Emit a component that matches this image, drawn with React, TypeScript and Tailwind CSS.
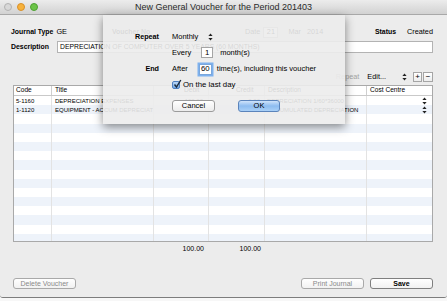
import React from "react";

const COLS = "grid grid-cols-[38px_102px_55px_56px_102px_65px]";

const ROWS = [
  {
    code: "5-1160",
    title: "DEPRECIATION EXPENSES",
    debit: "100.00",
    credit: "0.00",
    desc: "DEPRECIATION 1/60*36000",
  },
  {
    code: "1-1120",
    title: "EQUIPMENT - ACCUM DEPRECIAT",
    debit: "0.00",
    credit: "100.00",
    desc: "ACCUMULATED DEPRECIATION",
  },
];

function UpDown({ className = "" }: { className?: string }) {
  return (
    <svg width="5" height="8" viewBox="0 0 5 8" className={className}>
      <path d="M2.5 0.5 L4.6 3 L0.4 3 Z" fill="#222" />
      <path d="M2.5 7.5 L4.6 5 L0.4 5 Z" fill="#222" />
    </svg>
  );
}

function Light({ color }: { color: string }) {
  return <span className={`block w-[8px] h-[8px] rounded-full border ${color}`} />;
}

function Btn({
  children,
  w,
  disabled,
}: {
  children: React.ReactNode;
  w: string;
  disabled?: boolean;
}) {
  return (
    <div
      className={`${w} h-[11px] flex items-center justify-center rounded-[3px] border border-[#a9a9a9] bg-gradient-to-b from-white to-[#f1f1f1] text-[7px] leading-none ${
        disabled ? "text-[#8a8a8a]" : "text-black"
      }`}
    >
      {children}
    </div>
  );
}

export default function App() {
  const blank = Array.from({ length: 14 });

  return (
    <div className="relative w-[447px] h-[301px] overflow-hidden bg-[#f7f7f7] font-['Liberation_Sans',Arial,sans-serif] text-black">
      {/* Window */}
      <div className="h-[298px] flex flex-col bg-[#ececec] border-b border-[#7d7d7d] rounded-b-[3px]">
        {/* Title bar */}
        <div className="relative h-[15px] shrink-0 flex items-center bg-gradient-to-b from-[#ececec] to-[#d2d2d2] border-b border-[#a8a8a8]">
          <div className="flex items-center gap-[5px] pl-[4px]">
            <Light color="bg-[#d8d8d8] border-[#b2b2b2]" />
            <Light color="bg-[#f7b23c] border-[#d8902a]" />
            <Light color="bg-[#6cc448] border-[#4ea032]" />
          </div>
          <div className="absolute inset-0 flex items-center justify-center text-[9px] text-[#2a2a2a] leading-none">
            New General Voucher for the Period 201403
          </div>
        </div>

        {/* Content */}
        <div className="flex-1 flex flex-col pl-[11px] pr-[14px]">
          {/* Row 1 */}
          <div className="mt-[11px] h-[12px] flex items-center text-[7.3px] leading-none">
            <div className="w-[101px] flex items-center gap-[3px]">
              <span className="font-bold text-[6.9px]">Journal Type</span>
              <span>GE</span>
            </div>
            <div className="w-[133px] flex items-center">
              <span className="font-bold text-[6.9px] text-[#333]">Voucher No</span>
            </div>
            <div className="flex items-center">
              <span>Date</span>
              <span className="ml-[3px] w-[15px] h-[11px] bg-white border border-[#b9b9b9] flex items-center justify-center">
                21
              </span>
              <span className="ml-[10px]">Mar</span>
              <span className="ml-[6px]">2014</span>
            </div>
            <div className="flex-1" />
            <span className="font-bold text-[6.9px]">Status</span>
            <span className="ml-[11px]">Created</span>
          </div>

          {/* Row 2 */}
          <div className="mt-[3px] h-[12px] flex items-center">
            <span className="font-bold text-[6.9px] leading-none w-[46px]">Description</span>
            <div className="flex-1 h-[12px] bg-white border border-[#b3b3b3] flex items-center pl-[2px] text-[6.8px] leading-none">
              DEPRECIATION OF COMPUTER OVER 5 YEARS (60 MONTHS)
            </div>
          </div>

          {/* Toolbar row */}
          <div className="mt-[19px] h-[10px] flex items-center justify-end text-[7.3px] leading-none">
            <span className="text-[#a3a3a3]">Repeat</span>
            <span className="ml-[8px]">Edit...</span>
            <UpDown className="ml-[16px]" />
            <div className="ml-[6px] w-[9px] h-[10px] flex items-center justify-center border border-[#a5a5a5] bg-gradient-to-b from-white to-[#ededed] text-[8px]">
              +
            </div>
            <div className="ml-[1px] w-[10px] h-[10px] flex items-center justify-center border border-[#a5a5a5] bg-gradient-to-b from-white to-[#ededed] text-[8px]">
              −
            </div>
          </div>

          {/* Table */}
          <div className="mt-[3px] ml-[2px] w-[420px] h-[157px] bg-white border border-[#a9a9a9] overflow-hidden">
            <div className={`${COLS} h-[10px] border-b border-[#c9c9c9] text-[6.6px] leading-none`}>
              <div className="flex items-center pl-[2px] border-r border-[#cfcfcf]">Code</div>
              <div className="flex items-center pl-[3px] border-r border-[#cfcfcf]">Title</div>
              <div className="flex items-center pl-[30px] border-r border-[#cfcfcf]">Debit</div>
              <div className="flex items-center pl-[27px] border-r border-[#cfcfcf]">Credit</div>
              <div className="flex items-center pl-[3px] border-r border-[#cfcfcf]">Description</div>
              <div className="flex items-center pl-[3px]">Cost Centre</div>
            </div>
            {ROWS.map((r, i) => (
              <div
                key={r.code}
                className={`${COLS} h-[9.2px] text-[6px] leading-none ${i % 2 ? "bg-[#eef3fa]" : "bg-white"}`}
              >
                <div className="flex items-center pl-[2px] border-r border-[#e3e3e3]">{r.code}</div>
                <div className="flex items-center pl-[3px] border-r border-[#e3e3e3] whitespace-nowrap overflow-hidden">
                  {r.title}
                </div>
                <div className="flex items-center justify-end pr-[5px] border-r border-[#e3e3e3]">{r.debit}</div>
                <div className="flex items-center justify-end pr-[4px] border-r border-[#e3e3e3]">{r.credit}</div>
                <div className="flex items-center pl-[2px] border-r border-[#e3e3e3] whitespace-nowrap">{r.desc}</div>
                <div className="flex items-center justify-end pr-[5px]">
                  <UpDown />
                </div>
              </div>
            ))}
            {blank.map((_, i) => (
              <div key={i} className={`${COLS} h-[9.2px] ${i % 2 ? "bg-[#eef3fa]" : "bg-white"}`}>
                <div className="border-r border-[#e3e3e3]" />
                <div className="border-r border-[#e3e3e3]" />
                <div className="border-r border-[#e3e3e3]" />
                <div className="border-r border-[#e3e3e3]" />
                <div className="border-r border-[#e3e3e3]" />
                <div />
              </div>
            ))}
          </div>

          {/* Totals */}
          <div className={`${COLS} ml-[3px] h-[12px] text-[7px] leading-none`}>
            <div />
            <div />
            <div className="flex items-center justify-end pr-[5px]">100.00</div>
            <div className="flex items-center justify-end pr-[4px]">100.00</div>
            <div />
            <div />
          </div>

          <div className="flex-1" />

          {/* Bottom buttons */}
          <div className="mb-[8px] ml-[2px] flex items-center">
            <Btn w="w-[63px]" disabled>
              Delete Voucher
            </Btn>
            <div className="flex-1" />
            <Btn w="w-[63px]" disabled>
              Print Journal
            </Btn>
            <div className="ml-[6px] w-[63px] h-[11px] flex items-center justify-center rounded-[3px] border border-[#7f7f7f] bg-gradient-to-b from-white to-[#f1f1f1] text-[7px] leading-none font-bold">
              Save
            </div>
          </div>
        </div>
      </div>

      {/* Repeat sheet */}
      <div className="absolute left-[103px] top-[15px] w-[242px] h-[109px] bg-[#ececec]/[0.9] shadow-[0_3px_9px_rgba(0,0,0,0.45)] flex flex-col pt-[16px] text-[7.5px] leading-none">
        <div className="h-[12px] flex items-center">
          <span className="w-[56px] text-right font-bold text-[7.2px]">Repeat</span>
          <span className="ml-[13px]">Monthly</span>
          <UpDown className="ml-[10px]" />
        </div>
        <div className="mt-[4px] h-[11px] flex items-center">
          <span className="ml-[69px]">Every</span>
          <span className="ml-[10px] w-[12px] h-[11px] bg-white border border-[#a5a5a5] flex items-center justify-center text-[7.8px]">
            1
          </span>
          <span className="ml-[7px]">month(s)</span>
        </div>
        <div className="mt-[5px] h-[12px] flex items-center">
          <span className="w-[56px] text-right font-bold text-[7.2px]">End</span>
          <span className="ml-[13px]">After</span>
          <span className="ml-[11px] w-[13px] h-[11px] bg-white border border-[#7aa7dc] shadow-[0_0_0_1.5px_#7eb1ee] flex items-center justify-center text-[7.8px]">
            60
          </span>
          <span className="ml-[5px]">time(s), including this voucher</span>
        </div>
        <div className="mt-[5px] h-[10px] flex items-center">
          <span className="ml-[69px] relative w-[8px] h-[8px] rounded-[2px] border border-[#4e7fbf] bg-gradient-to-b from-[#bcd8f6] to-[#6fa6e4]">
            <svg width="9" height="10" viewBox="0 0 9 10" className="absolute left-[0px] top-[-3px]">
              <path d="M1.5 5.5 L3.5 8 L7.8 1" stroke="#1c2b3c" strokeWidth="1.4" fill="none" />
            </svg>
          </span>
          <span className="ml-[3px] text-[7.8px]">On the last day</span>
        </div>
        <div className="mt-[10px] flex items-center">
          <div className="ml-[69px] w-[43px] h-[12px] rounded-[3px] border border-[#9b9b9b] bg-gradient-to-b from-white to-[#ececec] flex items-center justify-center text-[7.5px]">
            Cancel
          </div>
          <div className="ml-[23px] w-[42px] h-[12px] rounded-[3px] border border-[#5b84bb] bg-gradient-to-b from-[#cfe3fa] via-[#8dbcf0] to-[#a9d0f7] flex items-center justify-center text-[7.5px]">
            OK
          </div>
        </div>
      </div>
    </div>
  );
}
